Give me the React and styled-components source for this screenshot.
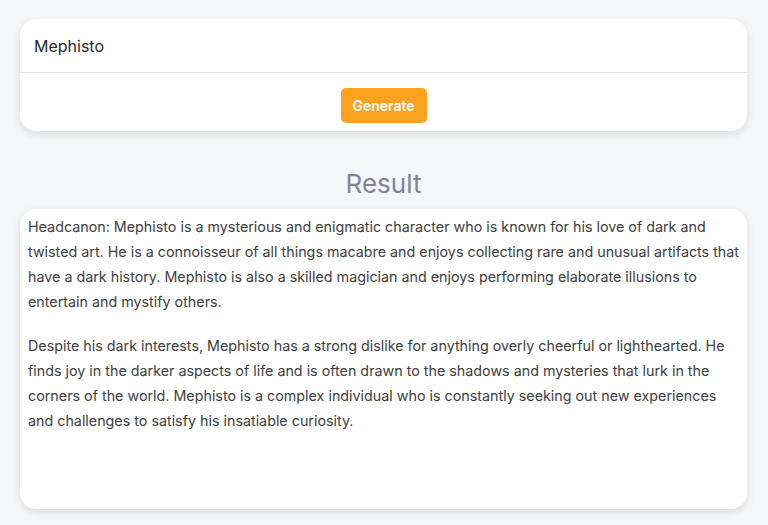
import styled, { createGlobalStyle } from "styled-components"

const GlobalStyle = createGlobalStyle`
    body {
        margin: 0;
        background: #f6f7f9;
        font-family: Inter, "Noto Sans", sans-serif;
    }
`

const resultText = [
    "Headcanon: Mephisto is a mysterious and enigmatic character who is known for his love of dark and twisted art. He is a connoisseur of all things macabre and enjoys collecting rare and unusual artifacts that have a dark history. Mephisto is also a skilled magician and enjoys performing elaborate illusions to entertain and mystify others.",
    "Despite his dark interests, Mephisto has a strong dislike for anything overly cheerful or lighthearted. He finds joy in the darker aspects of life and is often drawn to the shadows and mysteries that lurk in the corners of the world. Mephisto is a complex individual who is constantly seeking out new experiences and challenges to satisfy his insatiable curiosity.",
]

function App() {
    return (
        <>
            <GlobalStyle />
            <Page>
                <Card>
                    <NameInput type="text" defaultValue="Mephisto" />
                    <Actions>
                        <GenerateButton>Generate</GenerateButton>
                    </Actions>
                </Card>
                <Title>Result</Title>
                <ResultCard>
                    {resultText.map((p, i) => (
                        <Paragraph key={i}>{p}</Paragraph>
                    ))}
                </ResultCard>
            </Page>
        </>
    )
}

export default App

const Page = styled.div`
    display: flex;
    flex-direction: column;
    padding: 19px 21px 16px 20px;
    height: 525px;
    box-sizing: border-box;
`
const Card = styled.div`
    background: #fff;
    border-radius: 16px;
    box-shadow: 0 3px 8px rgba(0, 0, 0, 0.12);
    display: flex;
    flex-direction: column;
`
const NameInput = styled.input`
    border: none;
    border-bottom: 1px solid #e6e7ea;
    outline: none;
    background: transparent;
    height: 53px;
    padding: 0 14px;
    font-family: Inter, sans-serif;
    font-size: 16px;
    color: #2b2b2b;
`
const Actions = styled.div`
    display: flex;
    justify-content: center;
    padding: 15px 0 8px;
`
const GenerateButton = styled.button`
    border: none;
    border-radius: 5px;
    background: #fca21f;
    color: #fff;
    font-family: Inter, sans-serif;
    font-weight: 600;
    font-size: 14px;
    width: 86px;
    height: 35px;
    cursor: pointer;
`
const Title = styled.h2`
    margin: 37px 0 9px;
    text-align: center;
    font-weight: 400;
    font-size: 26px;
    line-height: 32px;
    color: #7d849f;
`
const ResultCard = styled.div`
    flex: 1;
    background: #fff;
    border-radius: 16px;
    box-shadow: 0 3px 8px rgba(0, 0, 0, 0.12);
    padding: 5px 3px 3px 8px;
`
const Paragraph = styled.p`
    margin: 0 0 19px;
    font-size: 14.3px;
    line-height: 25px;
    color: #404040;
`
